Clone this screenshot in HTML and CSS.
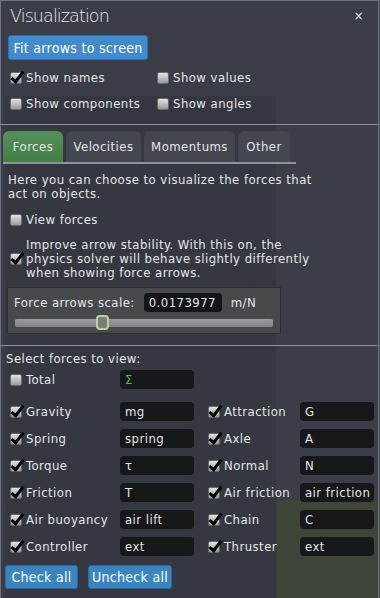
FILE: index.html
```html
<!DOCTYPE html>
<html>
<head>
<meta charset="utf-8">
<link rel="stylesheet" href="styles.css">
</head>
<body>
<div class="panel">
  <header class="head">
    <span class="title">Visualization</span>
    <span class="close">×</span>
  </header>
  <div class="fit-row"><button class="btn btn-fit">Fit arrows to screen</button></div>
  <div class="opts">
    <label class="chk"><span class="box on"></span>Show names</label>
    <label class="chk"><span class="box"></span>Show values</label>
    <label class="chk"><span class="box"></span>Show components</label>
    <label class="chk"><span class="box"></span>Show angles</label>
  </div>
  <div class="sep"></div>
  <nav class="tabs">
    <span class="tab active">Forces</span>
    <span class="tab">Velocities</span>
    <span class="tab">Momentums</span>
    <span class="tab">Other</span>
  </nav>
  <p class="desc">Here you can choose to visualize the forces that<br>act on objects.</p>
  <label class="chk view"><span class="box"></span>View forces</label>
  <div class="stab">
    <span class="box on"></span>
    <span class="stab-text">Improve arrow stability. With this on, the<br>physics solver will behave slightly differently<br>when showing force arrows.</span>
  </div>
  <div class="scalebox">
    <div class="scale-row">
      <span>Force arrows scale:</span>
      <span class="val">0.0173977</span>
      <span class="unit">m/N</span>
    </div>
    <div class="slider"><span class="thumb"></span></div>
  </div>
  <div class="sep sep2"></div>
  <div class="sel-title">Select forces to view:</div>
  <div class="forces">
    <label class="chk"><span class="box"></span>Total</label>
    <span class="inp sigma">Σ</span>
    <span></span><span></span><span></span>

    <label class="chk"><span class="box on"></span>Gravity</label>
    <span class="inp">mg</span>
    <span></span>
    <label class="chk"><span class="box on"></span>Attraction</label>
    <span class="inp">G</span>

    <label class="chk"><span class="box on"></span>Spring</label>
    <span class="inp">spring</span>
    <span></span>
    <label class="chk"><span class="box on"></span>Axle</label>
    <span class="inp">A</span>

    <label class="chk"><span class="box on"></span>Torque</label>
    <span class="inp">τ</span>
    <span></span>
    <label class="chk"><span class="box on"></span>Normal</label>
    <span class="inp">N</span>

    <label class="chk"><span class="box on"></span>Friction</label>
    <span class="inp">T</span>
    <span></span>
    <label class="chk"><span class="box on"></span>Air friction</label>
    <span class="inp">air friction</span>

    <label class="chk"><span class="box on"></span>Air buoyancy</label>
    <span class="inp">air lift</span>
    <span></span>
    <label class="chk"><span class="box on"></span>Chain</label>
    <span class="inp">C</span>

    <label class="chk"><span class="box on"></span>Controller</label>
    <span class="inp">ext</span>
    <span></span>
    <label class="chk"><span class="box on"></span>Thruster</label>
    <span class="inp">ext</span>
  </div>
  <div class="actions">
    <button class="btn btn-small">Check all</button>
    <button class="btn btn-small">Uncheck all</button>
  </div>
</div>
</body>
</html>
```
FILE: styles.css
```css
html, body {
  margin: 0;
  padding: 0;
  width: 380px;
  height: 598px;
  overflow: hidden;
  background: #4a4f5c;
}
.panel {
  box-sizing: border-box;
  width: 379px;
  height: 598px;
  border: 1px solid #6d7384;
  border-bottom: none;
  background-color: #3b3e49;
  background-image:
    linear-gradient(rgba(20,20,16,0.14), rgba(20,20,16,0.14)),
    linear-gradient(#3e4539, #3e4539);
  background-size: 271px 502px, 102px 100px;
  background-position: 4px 95px, 276px 499px;
  background-repeat: no-repeat;
  font-family: "DejaVu Sans", sans-serif;
  font-stretch: condensed;
  font-size: 13px;
  letter-spacing: 0.45px;
  line-height: 14px;
  color: #e6e6e6;
  display: flex;
  flex-direction: column;
}
.head {
  height: 30px;
  display: flex;
  align-items: center;
  justify-content: space-between;
  padding: 0 14px 0 9px;
}
.title {
  font-size: 17.5px;
  font-weight: 200;
  font-stretch: normal;
  letter-spacing: -0.9px;
}
.close {
  font-size: 13px;
  color: #f0f0f0;
}
.fit-row {
  padding-left: 7px;
  margin-top: 4px;
}
.btn {
  font-family: inherit;
  font-stretch: condensed;
  letter-spacing: 0.3px;
  color: #ffffff;
  border: 1px solid #2f6fa8;
  border-radius: 3px;
  cursor: default;
  padding: 0;
}
.btn-fit {
  width: 140px;
  height: 25px;
  font-size: 14px;
  background: #3f8bcd;
}
.opts {
  display: grid;
  grid-template-columns: 147px 150px;
  grid-auto-rows: 26px;
  padding-left: 9px;
  margin-top: 5px;
}
.chk {
  display: flex;
  align-items: center;
  gap: 4px;
  white-space: nowrap;
}
.box {
  box-sizing: border-box;
  width: 12px;
  height: 12px;
  flex: none;
  border: 1px solid #6a6a6a;
  border-radius: 2px;
  background: linear-gradient(#e2e2e2, #9a9a9a);
  position: relative;
}
.box.on::after {
  content: "";
  position: absolute;
  left: 3px;
  top: -4px;
  width: 4px;
  height: 11px;
  border: solid #000;
  border-width: 0 3px 3px 0;
  transform: rotate(38deg);
}
.sep {
  height: 1px;
  background: #8b909c;
  margin-top: 7px;
  margin-left: -1px;
}
.tabs {
  display: flex;
  gap: 3px;
  margin: 6px 0 0 2px;
  width: 293px;
  border-bottom: 2px solid #8d929c;
}
.tab {
  height: 31px;
  display: flex;
  align-items: center;
  justify-content: center;
  border-radius: 6px 6px 0 0;
  background: #45474f;
  font-size: 13px;
}
.tab:nth-child(1) { width: 60px; }
.tab:nth-child(2) { width: 75px; }
.tab:nth-child(3) { width: 91px; }
.tab:nth-child(4) { width: 52px; }
.tab.active {
  background: linear-gradient(#55905a, #447f48);
}
.desc {
  margin: 9px 0 0 7px;
}
.view {
  margin: 12px 0 0 9px;
}
.stab {
  display: flex;
  align-items: center;
  gap: 4px;
  margin: 11px 0 0 9px;
}
.scalebox {
  box-sizing: border-box;
  width: 274px;
  height: 47px;
  margin: 7px 0 0 6px;
  background: #48494d;
  border: 1px solid #2e2f33;
  padding: 5px 0 0 6px;
}
.scale-row {
  display: flex;
  align-items: center;
  height: 19px;
}
.val {
  margin-left: 9px;
  width: 78px;
  height: 19px;
  box-sizing: border-box;
  background: #141517;
  border-radius: 4px;
  padding-left: 5px;
  display: flex;
  align-items: center;
}
.unit { margin-left: 9px; }
.slider {
  position: relative;
  margin: 7px 0 0 1px;
  width: 258px;
  height: 8px;
  background: linear-gradient(#9a9c9f, #828487);
  border-radius: 2px;
}
.thumb {
  position: absolute;
  left: 81px;
  top: -4px;
  width: 13px;
  height: 15px;
  box-sizing: border-box;
  border: 2px solid #b7d49a;
  border-radius: 4px;
  background: #7a7c7e;
}
.sep2 { margin-top: 11px; }
.sel-title { margin: 6px 0 0 5px; }
.forces {
  display: grid;
  grid-template-columns: 110px 74px 14px 92px 74px;
  grid-template-rows: 24px;
  grid-auto-rows: 19px;
  row-gap: 8px;
  align-items: start;
  padding-left: 9px;
  margin-top: 4px;
}
.forces .chk { height: 19px; }
.inp {
  box-sizing: border-box;
  height: 19px;
  background: #17181a;
  border-radius: 4px;
  padding-left: 5px;
  display: flex;
  align-items: center;
  font-size: 13px;
  white-space: nowrap;
  overflow: hidden;
}
.sigma { color: #4fbf4f; }
.actions {
  display: flex;
  gap: 10px;
  margin: 9px 0 0 4px;
}
.btn-small {
  height: 24px;
  font-size: 14px;
  background: #3b84bf;
  border-color: #2f6a9c;
}
.actions .btn-small:first-child { width: 73px; }
.actions .btn-small:last-child { width: 84px; }
```
